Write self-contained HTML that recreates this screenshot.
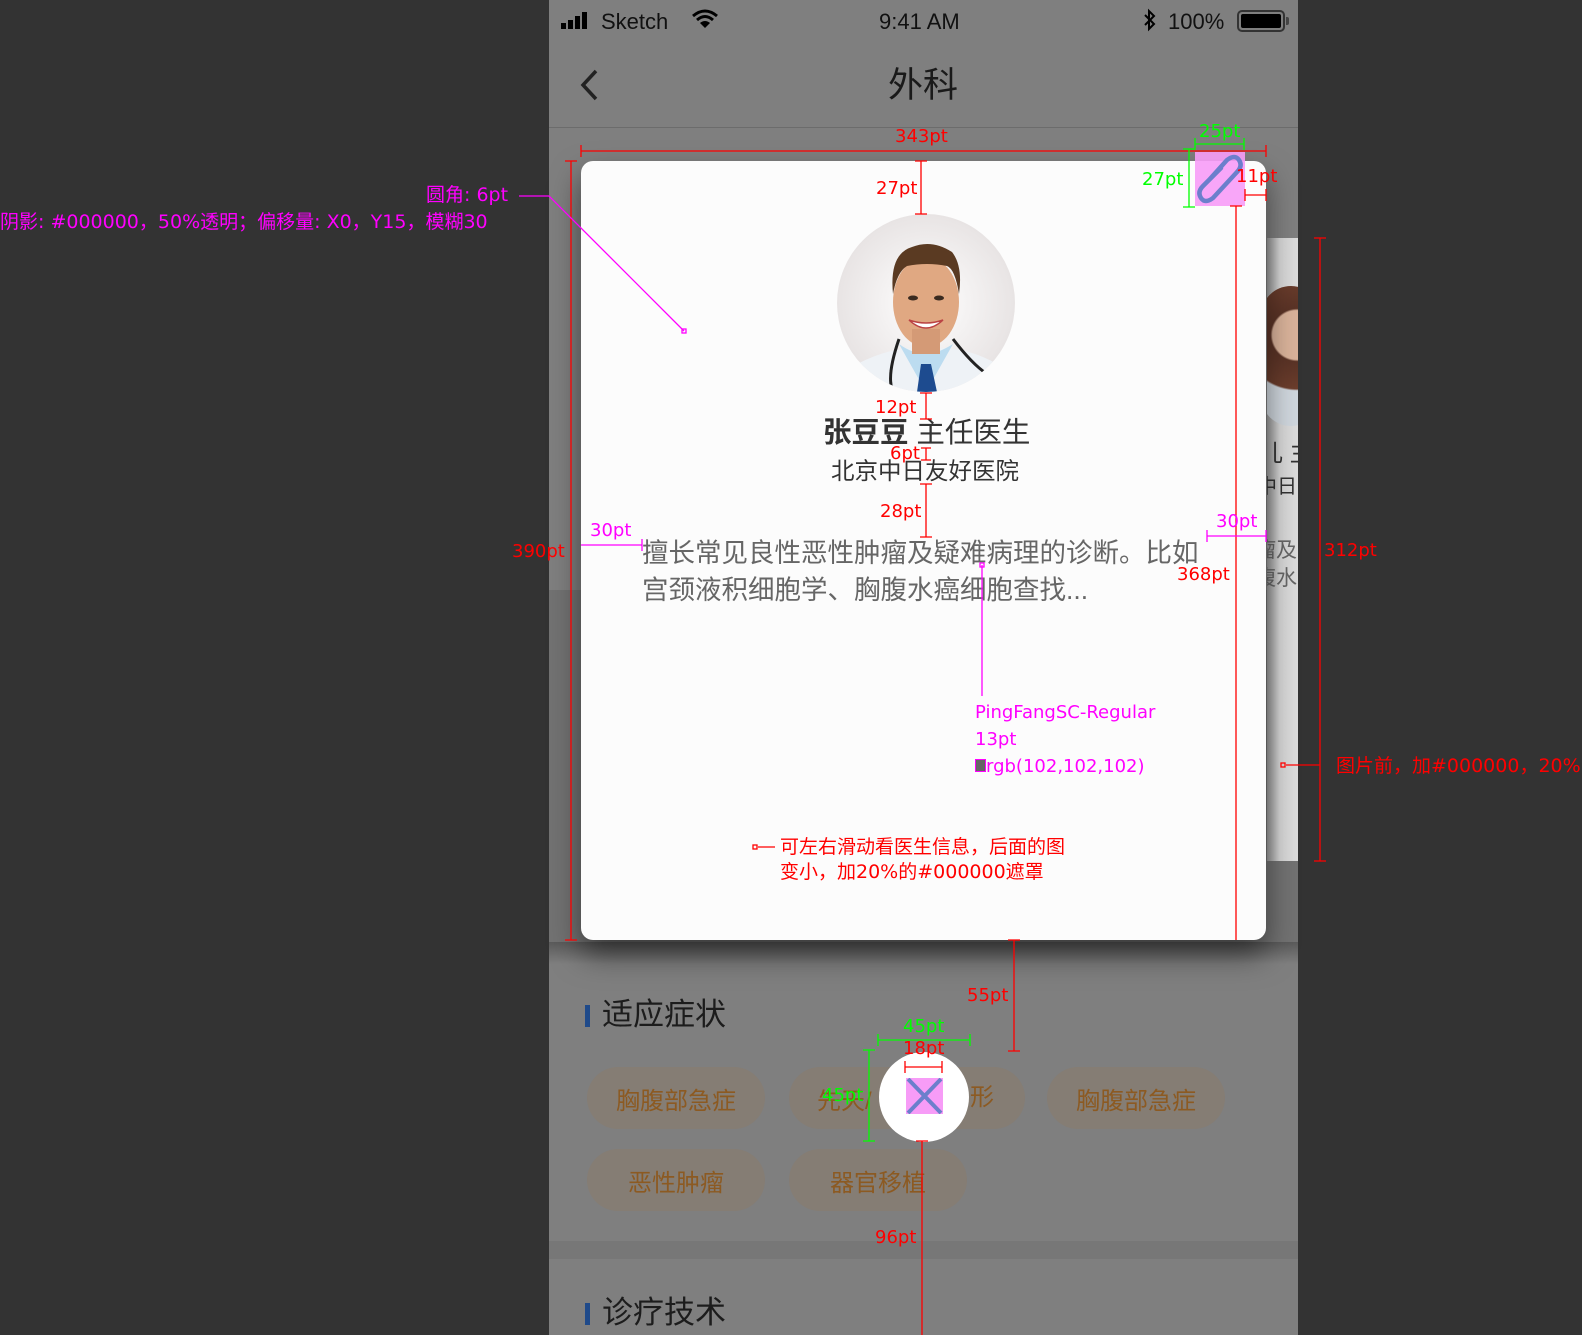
<!DOCTYPE html>
<html><head><meta charset="utf-8"><style>
*{margin:0;padding:0;box-sizing:border-box}
body{width:1582px;height:1335px;background:#333;position:relative;overflow:hidden;font-family:"Liberation Sans","Noto Sans CJK SC",sans-serif}
.a{position:absolute;white-space:nowrap;line-height:1}
.m,.r,.g{font-family:"DejaVu Sans","Noto Sans CJK SC",sans-serif}
.m{color:#ff00ff}.r{color:#ff0000}.g{color:#00ff00}
.pill{position:absolute;height:62px;border-radius:31px;background:#857d74;color:#8c5a22;font-size:24px;display:flex;align-items:center;justify-content:center}
</style></head><body>
<!-- phone -->
<div class="a" style="left:549px;top:0;width:749px;height:1335px;background:#7f7f7f"></div>
<div class="a" style="left:549px;top:127px;width:749px;height:1px;background:#6c6c6c"></div>
<div class="a" style="left:549px;top:590px;width:749px;height:352px;background:#727272"></div>
<div class="a" style="left:549px;top:942px;width:749px;height:22px;background:linear-gradient(#5a5a5a,#7f7f7f)"></div>
<div class="a" style="left:549px;top:1241px;width:749px;height:18px;background:#777"></div>
<!-- status -->
<div class="a" style="left:561px;top:12px;width:30px;height:18px">
<div class="a" style="left:0;top:11px;width:5px;height:6px;background:#000"></div>
<div class="a" style="left:7px;top:8px;width:5px;height:9px;background:#000"></div>
<div class="a" style="left:14px;top:4px;width:5px;height:13px;background:#000"></div>
<div class="a" style="left:21px;top:0;width:5px;height:17px;background:#000"></div></div>
<div class="a" style="left:601px;top:11px;font-size:22px;color:#111">Sketch</div>
<svg class="a" style="left:690px;top:8px" width="30" height="22"><path d="M3 8 Q15 -2 27 8" stroke="#000" stroke-width="3" fill="none"/><path d="M7 12 Q15 5 23 12" stroke="#000" stroke-width="3" fill="none"/><path d="M15 20 L10 15 Q15 11 20 15Z" fill="#000"/></svg>
<div class="a" style="left:879px;top:11px;font-size:22px;color:#111">9:41 AM</div>
<svg class="a" style="left:1142px;top:8px" width="16" height="24"><path d="M3 7 L12 16 L7 21 V3 L12 8 L3 17" stroke="#000" stroke-width="2" fill="none"/></svg>
<div class="a" style="left:1168px;top:11px;font-size:22px;color:#111">100%</div>
<div class="a" style="left:1237px;top:10px;width:48px;height:22px;border:2px solid #333;border-radius:5px;padding:2px"><div style="width:100%;height:100%;background:#000;border-radius:2px"></div></div>
<div class="a" style="left:1286px;top:17px;width:3px;height:8px;background:#444;border-radius:0 2px 2px 0"></div>
<!-- nav -->
<svg class="a" style="left:578px;top:68px" width="24" height="36"><path d="M18 3 L5 17 L18 31" stroke="#222" stroke-width="3.5" fill="none"/></svg>
<div class="a" style="left:888px;top:68px;font-size:35px;color:#1a1a1a">外科</div>
<!-- peek card -->
<div class="a" style="left:1267px;top:238px;width:31px;height:623px;background:linear-gradient(90deg,#9a9a9a,#d6d6d6 40%,#dcdcdc);overflow:hidden">
<div class="a" style="left:-6px;top:48px;width:60px;height:140px;border-radius:30px;background:radial-gradient(circle at 60% 35%,#d9b29a 25%,#5a3326 27%,#6b3d2c 55%,#cfd6dd 57%)"></div>
<div class="a" style="left:-8px;top:204px;font-size:24px;color:#333">儿 主</div>
<div class="a" style="left:-10px;top:239px;font-size:20px;color:#333">中日</div>
<div class="a" style="left:-12px;top:302px;font-size:21px;color:#666">瘤及</div>
<div class="a" style="left:-12px;top:330px;font-size:21px;color:#666">腹水</div>
</div>
<!-- card -->
<div class="a" style="left:581px;top:161px;width:685px;height:779px;background:#fcfcfc;border-radius:12px;box-shadow:0 15px 30px rgba(0,0,0,.5)"></div>
<svg class="a" style="left:837px;top:214px" width="178" height="178">
<defs><clipPath id="c"><circle cx="89" cy="89" r="89"/></clipPath><radialGradient id="bg"><stop offset="0" stop-color="#fff"/><stop offset="1" stop-color="#e8e4e4"/></radialGradient></defs>
<g clip-path="url(#c)">
<rect width="178" height="178" fill="url(#bg)"/>
<path d="M0 178 L20 150 Q60 130 89 135 Q125 130 160 150 L178 178Z" fill="#eef2f6"/>
<path d="M62 130 L89 178 L116 130 Q100 140 89 140 Q76 140 62 130Z" fill="#bcdcf0"/>
<path d="M84 150 L94 150 L100 178 L80 178Z" fill="#1d4b8f"/>
<path d="M62 125 Q50 160 55 175" stroke="#222" stroke-width="3" fill="none"/><path d="M116 125 Q135 150 150 160" stroke="#222" stroke-width="3" fill="none"/>
<ellipse cx="89" cy="88" rx="33" ry="45" fill="#e0a882"/>
<rect x="75" y="115" width="28" height="25" fill="#d49a76"/>
<path d="M56 80 Q52 40 75 33 Q95 25 115 38 Q126 52 122 80 Q118 55 110 52 Q90 48 70 52 Q60 58 56 80Z" fill="#5a3a22"/>
<ellipse cx="76" cy="84" rx="5" ry="2.5" fill="#3a2a20"/><ellipse cx="102" cy="84" rx="5" ry="2.5" fill="#3a2a20"/>
<path d="M72 106 Q89 122 106 106 Q89 112 72 106Z" fill="#fff" stroke="#b44" stroke-width="1.5"/>
</g></svg>
<div class="a" style="left:823px;top:419px;font-size:28.5px;color:#333"><b style="font-weight:bold">张豆豆</b> 主任医生</div>
<div class="a" style="left:831px;top:460px;font-size:23.5px;color:#333">北京中日友好医院</div>
<div class="a" style="left:642px;top:535px;font-size:26.5px;color:#666;line-height:37px;width:572px;white-space:normal">擅长常见良性恶性肿瘤及疑难病理的诊断。比如宫颈液积细胞学、胸腹水癌细胞查找...</div>
<!-- lower section -->
<div class="a" style="left:585px;top:1005px;width:5px;height:22px;background:#1f4a8a"></div>
<div class="a" style="left:602px;top:999px;font-size:31px;color:#1c1c1c">适应症状</div>
<div class="pill" style="left:587px;top:1067px;width:178px">胸腹部急症</div>
<div class="pill" style="left:789px;top:1067px;width:236px;justify-content:flex-start;padding-left:28px">先天/</div>
<div class="a" style="left:970px;top:1086px;font-size:24px;color:#8c5a22">形</div>
<div class="pill" style="left:1047px;top:1067px;width:178px">胸腹部急症</div>
<div class="pill" style="left:587px;top:1149px;width:178px">恶性肿瘤</div>
<div class="pill" style="left:789px;top:1149px;width:178px">器官移植</div>
<div class="a" style="left:585px;top:1303px;width:5px;height:22px;background:#1f4a8a"></div>
<div class="a" style="left:602px;top:1297px;font-size:31px;color:#1c1c1c">诊疗技术</div>
<div class="a" style="left:879px;top:1052px;width:90px;height:90px;border-radius:50%;background:#fff"></div>
<svg class="a" style="left:906px;top:1078px" width="37" height="36"><rect width="37" height="36" fill="#f79cf7"/><path d="M2 1 L35 35 M35 1 L2 35" stroke="#6c7fcc" stroke-width="4"/></svg>
<!-- paperclip -->
<svg class="a" style="left:1195px;top:152px" width="50" height="54"><rect width="50" height="54" fill="#f79cf7" opacity=".9"/><path d="M14 28 L32 8 Q40 2 44 8 Q48 14 42 20 L18 46 Q10 52 6 46 Q2 40 8 34 L26 16" stroke="#6c7fcc" stroke-width="4.5" fill="none" stroke-linecap="round"/></svg>
<!-- annotation lines -->
<svg class="a" style="left:0;top:0" width="1582" height="1335">
<g stroke="#ff0000" stroke-width="1.3" fill="none">
<path d="M581 151 H1266 M581 145 V157 M1266 145 V157"/>
<path d="M921 161 V214 M915 161 H927 M915 214 H927"/>
<path d="M1236 206 V940 M1230 206 H1242"/>
<path d="M1245 195 H1266 M1245 189 V201 M1266 189 V201"/>
<path d="M571 161 V940 M565 161 H577 M565 940 H577"/>
<path d="M926 393 V419 M920 393 H932 M920 419 H932"/>
<path d="M926 448 V460 M921 448 H931 M921 460 H931"/>
<path d="M926 484 V537 M920 484 H932 M920 537 H932"/>
<path d="M1320 238 V861 M1314 238 H1326 M1314 861 H1326"/>
<path d="M1286 765 H1320"/><rect x="1281" y="763" width="4" height="4"/>
<path d="M758 847 H775"/><rect x="753" y="845" width="4" height="4"/>
<path d="M1014 940 V1051 M1008 1051 H1020 M1008 940 H1020"/>
<path d="M905 1067 H942 M905 1061 V1073 M942 1061 V1073"/>
<path d="M922 1141 V1335 M916 1141 H928"/>
</g>
<g stroke="#00ff00" stroke-width="1.3" fill="none">
<path d="M1195 144 H1244 M1195 138 V150 M1244 138 V150"/>
<path d="M1189 149 V207 M1183 149 H1195 M1183 207 H1195"/>
<path d="M878 1040 H970 M878 1034 V1046 M970 1034 V1046"/>
<path d="M869 1050 V1141 M863 1050 H875 M863 1141 H875"/>
</g>
<g stroke="#ff00ff" stroke-width="1.3" fill="none">
<path d="M519 196 H549 L684 331"/><rect x="682" y="329" width="4" height="4"/>
<path d="M581 545 H642 M642 539 V551"/>
<path d="M1207 536 H1266 M1207 530 V542 M1266 530 V542"/>
<path d="M982 565 V696"/><rect x="980" y="563" width="4" height="4"/>
</g></svg>
<!-- annotation text -->
<div class="a m" style="left:426px;top:186px;font-size:19px">圆角: 6pt</div>
<div class="a m" style="left:0;top:213px;font-size:19px">阴影: #000000，50%透明；偏移量: X0，Y15，模糊30</div>
<div class="a r" style="left:895px;top:128px;font-size:18px">343pt</div>
<div class="a g" style="left:1199px;top:123px;font-size:18px">25pt</div>
<div class="a r" style="left:876px;top:180px;font-size:18px">27pt</div>
<div class="a g" style="left:1142px;top:171px;font-size:18px">27pt</div>
<div class="a r" style="left:1236px;top:168px;font-size:18px">11pt</div>
<div class="a r" style="left:875px;top:399px;font-size:18px">12pt</div>
<div class="a r" style="left:890px;top:445px;font-size:18px">6pt</div>
<div class="a r" style="left:880px;top:503px;font-size:18px">28pt</div>
<div class="a m" style="left:590px;top:522px;font-size:18px">30pt</div>
<div class="a r" style="left:512px;top:543px;font-size:18px">390pt</div>
<div class="a m" style="left:1216px;top:513px;font-size:18px">30pt</div>
<div class="a r" style="left:1177px;top:566px;font-size:18px">368pt</div>
<div class="a r" style="left:1324px;top:542px;font-size:18px">312pt</div>
<div class="a m" style="left:975px;top:704px;font-size:18px">PingFangSC-Regular</div>
<div class="a m" style="left:975px;top:731px;font-size:18px">13pt</div>
<div class="a m" style="left:975px;top:758px;font-size:18px"><span style="display:inline-block;width:11px;height:13px;background:#666;border:1px solid #f0f"></span>rgb(102,102,102)</div>
<div class="a r" style="left:1336px;top:757px;font-size:19px">图片前，加#000000，20%</div>
<div class="a r" style="left:780px;top:838px;font-size:19px">可左右滑动看医生信息，后面的图</div>
<div class="a r" style="left:780px;top:863px;font-size:19px">变小，加20%的#000000遮罩</div>
<div class="a r" style="left:967px;top:987px;font-size:18px">55pt</div>
<div class="a g" style="left:903px;top:1018px;font-size:18px">45pt</div>
<div class="a r" style="left:903px;top:1040px;font-size:18px">18pt</div>
<div class="a g" style="left:822px;top:1087px;font-size:18px">45pt</div>
<div class="a r" style="left:875px;top:1229px;font-size:18px">96pt</div>
</body></html>
